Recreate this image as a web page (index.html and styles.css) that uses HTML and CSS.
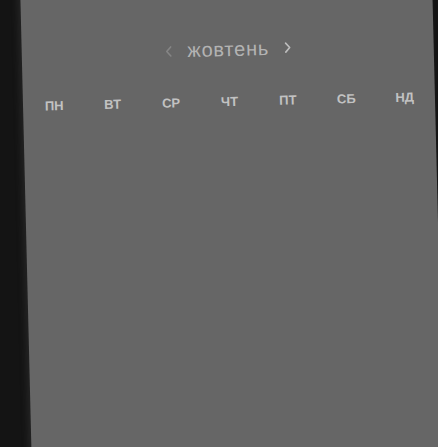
FILE: index.html
```html
<!DOCTYPE html>
<html lang="uk">
<head>
<meta charset="utf-8">
<link rel="stylesheet" href="styles.css">
</head>
<body>
<div class="card">
  <div class="header">
    <svg class="chev chev-prev" width="8" height="12" viewBox="0 0 8 12"><polyline points="6,1.5 2,6 6,10.5" fill="none" stroke="currentColor" stroke-width="1.6" stroke-linecap="round" stroke-linejoin="round"/></svg>
    <span class="month">жовтень</span>
    <svg class="chev chev-next" width="8" height="12" viewBox="0 0 8 12"><polyline points="2,1.5 6,6 2,10.5" fill="none" stroke="currentColor" stroke-width="1.6" stroke-linecap="round" stroke-linejoin="round"/></svg>
  </div>
  <div class="weekdays">
    <span>ПН</span><span>ВТ</span><span>СР</span><span>ЧТ</span><span>ПТ</span><span>СБ</span><span>НД</span>
  </div>
</div>
</body>
</html>
```
FILE: styles.css
```css
html, body {
  margin: 0;
  padding: 0;
  width: 438px;
  height: 447px;
  overflow: hidden;
  background: #141414;
}
body {
  font-family: "Liberation Sans", Arial, sans-serif;
}
.card {
  box-sizing: border-box;
  width: 412px;
  height: 510px;
  margin: -30px 0 0 25.5px;
  background: #666666;
  transform: rotate(-1.4deg);
  transform-origin: 50% 50%;
  box-shadow: -3px 0 6px rgba(70, 70, 70, 0.35);
  padding: 67px 1px 0 2px;
}
.header {
  height: 26px;
  display: flex;
  align-items: center;
  justify-content: center;
  gap: 15px;
}
.month {
  font-size: 20px;
  letter-spacing: 0.8px;
  color: #b3b3b3;
  line-height: 26px;
  padding-bottom: 2px;
}
.chev {
  display: block;
}
.chev-prev {
  color: #858585;
  margin-top: 0;
}
.chev-next {
  color: #bdbdbd;
  margin-top: -2px;
}
.weekdays {
  margin-top: 31px;
  display: grid;
  grid-template-columns: repeat(7, 1fr);
  text-align: center;
  font-size: 13px;
  font-weight: bold;
  color: #c2c2c2;
  line-height: 15px;
}
```
